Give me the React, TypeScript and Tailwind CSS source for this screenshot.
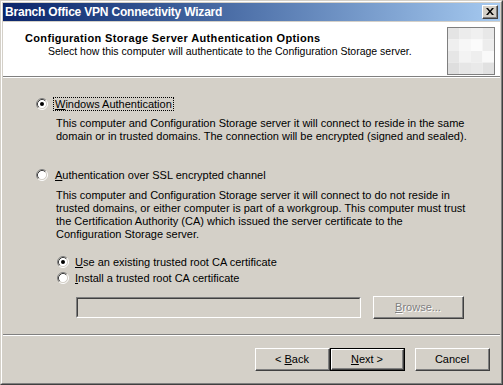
import type { ReactNode } from 'react';

const ui = "font-['Liberation_Sans',Arial,sans-serif]";

function Radio({ checked = false }: { checked?: boolean }) {
    return (
        <svg width="12" height="12" viewBox="0 0 12 12" className="shrink-0">
            <circle cx="6" cy="6" r="4.5" fill="#ffffff" />
            <path d="M2.11 9.89 A5.5 5.5 0 0 1 9.89 2.11" fill="none" stroke="#808080" />
            <path d="M9.89 2.11 A5.5 5.5 0 0 1 2.11 9.89" fill="none" stroke="#ffffff" />
            <path d="M2.82 9.18 A4.5 4.5 0 0 1 9.18 2.82" fill="none" stroke="#404040" />
            <path d="M9.18 2.82 A4.5 4.5 0 0 1 2.82 9.18" fill="none" stroke="#d4d0c8" />
            {checked && <circle cx="6" cy="6" r="2" fill="#000000" />}
        </svg>
    );
}

function Button({
    children,
    isDefault = false,
    disabled = false,
    width = 'w-[75px]',
}: {
    children: ReactNode;
    isDefault?: boolean;
    disabled?: boolean;
    width?: string;
}) {
    const face = (
        <div className="flex h-full w-full border border-t-white border-l-white border-r-[#404040] border-b-[#404040]">
            <div className="flex h-full w-full items-center justify-center border-r border-b border-[#808080]">
                <span
                    className={
                        disabled
                            ? 'text-[#808080] [text-shadow:1px_1px_0_#ffffff]'
                            : 'text-black'
                    }
                >
                    {children}
                </span>
            </div>
        </div>
    );
    return (
        <div className={`${width} h-[23px] shrink-0 bg-[#d4d0c8]`}>
            {isDefault ? <div className="h-full w-full border border-black">{face}</div> : face}
        </div>
    );
}

function HeaderArt() {
    // faded wizard watermark in the header box
    const cells = [
        ['#e4e4e4', '#ececec', '#f0f0f0', '#e8e8e8'],
        ['#efefef', '#f7f7f7', '#fbfbfb', '#ededed'],
        ['#e6e6e6', '#f3f3f3', '#eeeeee', '#f9f9f9'],
        ['#dedede', '#e6e6e6', '#e9e9e9', '#e1e1e1'],
    ];
    return (
        <svg width="48" height="48" viewBox="0 0 48 48" className="shrink-0">
            {cells.map((row, r) =>
                row.map((c, i) => (
                    <rect key={`${r}-${i}`} x={1 + i * 11.5} y={1 + r * 11.5} width="11.5" height="11.5" fill={c} />
                )),
            )}
            <rect x="0.5" y="0.5" width="47" height="47" fill="none" stroke="#7f7f7f" />
        </svg>
    );
}

export default function App() {
    return (
        <div className={`${ui} h-[385px] w-[503px] select-none text-[11px] leading-[13px] text-black`}>
            <div className="flex h-full flex-col border border-t-[#d4d0c8] border-l-[#d4d0c8] border-r-[#404040] border-b-[#404040]">
                <div className="flex h-full flex-col border border-t-white border-l-white border-r-[#808080] border-b-[#808080] bg-[#d4d0c8] p-px">
                    {/* title bar */}
                    <div className="flex h-[18px] shrink-0 items-center justify-between bg-gradient-to-r from-[#0a246a] to-[#a6caf0] pr-[2px] pl-[2px]">
                        <span className="text-[12px] font-bold tracking-[-0.2px] text-white">
                            Branch Office VPN Connectivity Wizard
                        </span>
                        <div className="h-[14px] w-[16px] bg-[#d4d0c8] border border-t-white border-l-white border-r-[#404040] border-b-[#404040]">
                            <div className="flex h-full w-full items-center justify-center border-r border-b border-[#808080]">
                                <svg width="8" height="7" viewBox="0 0 8 7">
                                    <path d="M0 0h2l2 2.5L6 0h2L5 3.5 8 7H6L4 4.5 2 7H0l3-3.5z" fill="#000" />
                                </svg>
                            </div>
                        </div>
                    </div>

                    {/* header */}
                    <div className="mt-px flex h-[54px] shrink-0 justify-between bg-white pt-[10px] pr-[5px] pl-[22px]">
                        <div>
                            <div className="font-bold tracking-[0.35px]">
                                Configuration Storage Server Authentication Options
                            </div>
                            <div className="pl-[23px] text-[10.5px] leading-[12px]">
                                Select how this computer will authenticate to the Configuration Storage server.
                            </div>
                        </div>
                        <div className="-mt-[5px]">
                            <HeaderArt />
                        </div>
                    </div>
                    <div className="h-px shrink-0 bg-[#808080]" />
                    <div className="h-px shrink-0 bg-white" />

                    {/* body */}
                    <div className="flex flex-1 flex-col pl-[33px]">
                        <div className="mt-[19px] flex h-[14px] items-center gap-[5px]">
                            <Radio checked />
                            <span className="border border-dotted border-black px-px leading-[12px]">
                                <u>W</u>indows Authentication
                            </span>
                        </div>
                        <div className="mt-[6px] pl-[20px] whitespace-nowrap">
                            <div>This computer and Configuration Storage server it will connect to reside in the same</div>
                            <div>domain or in trusted domains. The connection will be encrypted (signed and sealed).</div>
                        </div>

                        <div className="mt-[25px] flex h-[14px] items-center gap-[5px]">
                            <Radio />
                            <span className="px-[2px]">
                                <u>A</u>uthentication over SSL encrypted channel
                            </span>
                        </div>
                        <div className="mt-[7px] pl-[20px] whitespace-nowrap">
                            <div>This computer and Configuration Storage server it will connect to do not reside in</div>
                            <div>trusted domains, or either computer is part of a workgroup. This computer must trust</div>
                            <div>the Certification Authority (CA) which issued the server certificate to the</div>
                            <div>Configuration Storage server.</div>
                        </div>

                        <div className="mt-[14px] flex flex-col gap-[2px] pl-[21px]">
                            <div className="flex h-[14px] items-center gap-[4px]">
                                <Radio checked />
                                <span className="px-[2px]">
                                    <u>U</u>se an existing trusted root CA certificate
                                </span>
                            </div>
                            <div className="flex h-[14px] items-center gap-[4px]">
                                <Radio />
                                <span className="px-[2px]">
                                    <u>I</u>nstall a trusted root CA certificate
                                </span>
                            </div>
                        </div>

                        <div className="mt-[11px] flex items-start gap-[12px] pl-[40px]">
                            <div className="mt-px h-[21px] w-[285px] border border-t-[#808080] border-l-[#808080] border-r-white border-b-white">
                                <div className="h-full w-full border border-t-[#404040] border-l-[#404040] border-r-[#d4d0c8] border-b-[#d4d0c8] bg-[#d4d0c8]" />
                            </div>
                            <Button disabled width="w-[91px]">
                                <u>B</u>rowse...
                            </Button>
                        </div>
                    </div>

                    {/* footer */}
                    <div className="h-px shrink-0 bg-[#808080]" />
                    <div className="h-px shrink-0 bg-white" />
                    <div className="flex shrink-0 justify-end pt-[12px] pr-[10px] pb-[11px]">
                        <Button>
                            &lt; <u>B</u>ack
                        </Button>
                        <Button isDefault>
                            <u>N</u>ext &gt;
                        </Button>
                        <div className="w-[10px]" />
                        <Button>Cancel</Button>
                    </div>
                </div>
            </div>
        </div>
    );
}
